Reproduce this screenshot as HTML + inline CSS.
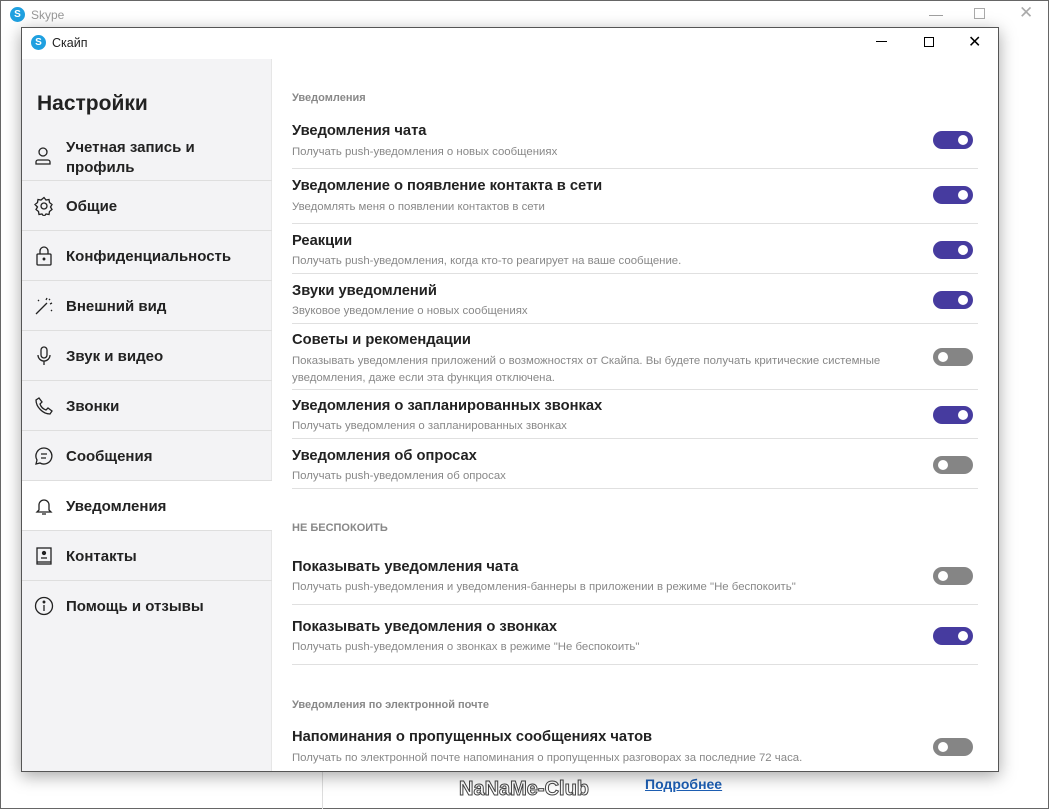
<!DOCTYPE html>
<html><head><meta charset="utf-8"><style>
*{margin:0;padding:0;box-sizing:border-box}
body{width:1049px;height:809px;overflow:hidden;background:#fff;font-family:"Liberation Sans","Noto Sans CJK SC",sans-serif;position:relative;color:#222}
.a{position:absolute;white-space:nowrap}
.outer{position:absolute;left:0;top:0;width:1049px;height:809px;border:1px solid #666;background:#fff}
.dlg{position:absolute;left:21px;top:27px;width:978px;height:745px;background:#fff;border:1px solid #555;box-shadow:0 4px 16px rgba(0,0,0,.35);overflow:hidden}
.side{position:absolute;left:0;top:31px;width:250px;height:714px;background:#f3f3f5;border-right:1px solid #e6e6e6}
.item{position:absolute;left:0;width:250px;height:50px;border-bottom:1px solid #dedede}
.item span{position:absolute;left:44px;top:17px;font-size:15px;font-weight:bold;color:#222}
.item svg{position:absolute;left:12px;top:15px}
.t{font-size:14.7px;font-weight:bold;color:#222}
.s{font-size:11.4px;color:#888}
.h{font-size:11px;font-weight:bold;color:#888}
.sep{position:absolute;left:270px;width:686px;height:1px;background:#e0e0e0}
.tg{position:absolute;left:911px;width:40px;height:18px;border-radius:9px;background:#463b9f}
.tg:after{content:"";position:absolute;right:5px;top:4px;width:10px;height:10px;border-radius:50%;background:#fff}
.tg.off{background:#858585}
.tg.off:after{right:auto;left:5px}
</style></head><body>
<div class="outer"></div>
<div class="a" style="left:10px;top:7px;width:15px;height:15px;border-radius:50%;background:#1fa0e0;color:#fff;font-size:10px;font-weight:bold;text-align:center;line-height:15px">S</div>
<div class="a" style="left:31px;top:8px;font-size:12px;color:#999">Skype</div>
<div class="a" style="left:929px;top:6px;font-size:14px;color:#999">—</div>
<div class="a" style="left:974px;top:8px;width:11px;height:11px;border:1px solid #aaa"></div>
<div class="a" style="left:1019px;top:3px;font-size:17px;color:#aaa">✕</div>
<div class="a" style="left:322px;top:771px;width:1px;height:38px;background:#ddd"></div>
<div class="a" style="left:459px;top:778px;font-size:20px;color:#fff;-webkit-text-stroke:1px #444;font-weight:bold">NaNaMe-Club</div>
<div class="a" style="left:645px;top:776px;font-size:14px;font-weight:bold;color:#1d5fb4;text-decoration:underline">Подробнее</div>

<div class="dlg">
 <div class="a" style="left:9px;top:7px;width:15px;height:15px;border-radius:50%;background:#1fa0e0;color:#fff;font-size:10px;font-weight:bold;text-align:center;line-height:15px">S</div>
 <div class="a" style="left:30px;top:8px;font-size:12.5px;color:#222">Скайп</div>
 <div class="a" style="left:854px;top:13px;width:11px;height:1px;background:#000"></div>
 <div class="a" style="left:902px;top:9px;width:10px;height:10px;border:1px solid #000"></div>
 <div class="a" style="left:946px;top:4px;font-size:16px;color:#000">✕</div>
 <div class="side">
  <div class="a" style="left:15px;top:33px;font-size:21px;font-weight:bold;color:#222">Настройки</div>
  <div class="item" style="top:71px;height:51px"><svg width="18" height="22" viewBox="0 0 18 22" fill="none" stroke="#222" stroke-width="1.3"><circle cx="9" cy="7" r="4"/><path d="M2 19v-2a2 2 0 0 1 2-2h10a2 2 0 0 1 2 2v2z"/></svg><span style="top:8px;line-height:20px">Учетная запись и<br>профиль</span></div>
  <div class="item" style="top:122px"><svg width="20" height="20" viewBox="0 0 20 20" fill="none" stroke="#222" stroke-width="1.3"><circle cx="10" cy="10" r="3"/><path d="M10 1.5l2 2.5 3-.5.5 3 2.5 2-1.5 2.5 1.5 2.5-2.5 2-.5 3-3-.5-2 2.5-2-2.5-3 .5-.5-3-2.5-2 1.5-2.5L1 8.5l2.5-2 .5-3 3 .5z"/></svg><span>Общие</span></div>
  <div class="item" style="top:172px"><svg width="20" height="20" viewBox="0 0 20 20" fill="none" stroke="#222" stroke-width="1.3"><rect x="3" y="8" width="14" height="11" rx="1"/><path d="M6 8V5a4 4 0 0 1 8 0v3"/><circle cx="10" cy="13" r=".8" fill="#222"/></svg><span>Конфиденциальность</span></div>
  <div class="item" style="top:222px"><svg width="20" height="20" viewBox="0 0 20 20" fill="none" stroke="#222" stroke-width="1.3"><path d="M2 18L13 7M12 4l1-2M16 8l2-1M15 3l1 1M4 4l1 1M17 14l1 1"/></svg><span>Внешний вид</span></div>
  <div class="item" style="top:272px"><svg width="20" height="20" viewBox="0 0 20 20" fill="none" stroke="#222" stroke-width="1.3"><rect x="7" y="1" width="6" height="11" rx="3"/><path d="M4 9a6 6 0 0 0 12 0M10 15v4"/></svg><span>Звук и видео</span></div>
  <div class="item" style="top:322px"><svg width="20" height="20" viewBox="0 0 20 20" fill="none" stroke="#222" stroke-width="1.3"><path d="M5 2l3 4-2 2c1 3 3 5 6 6l2-2 4 3-2 3C9 18 2 11 2 4z"/></svg><span>Звонки</span></div>
  <div class="item" style="top:372px"><svg width="20" height="20" viewBox="0 0 20 20" fill="none" stroke="#222" stroke-width="1.3"><path d="M10 2a8 8 0 1 1-4 15l-4 1 1-4A8 8 0 0 1 10 2zM7 8h6M7 12h5"/></svg><span>Сообщения</span></div>
  <div class="item" style="top:422px;background:#fff"><svg width="20" height="20" viewBox="0 0 20 20" fill="none" stroke="#222" stroke-width="1.3"><path d="M5 14V9a5 5 0 0 1 10 0v5l2 2H3zM8 18h4"/></svg><span>Уведомления</span></div>
  <div class="item" style="top:472px"><svg width="20" height="20" viewBox="0 0 20 20" fill="none" stroke="#222" stroke-width="1.3"><rect x="3" y="2" width="14" height="16"/><path d="M3 16h14"/><circle cx="10" cy="7" r="1.5" fill="#222"/><path d="M7 12h6"/></svg><span>Контакты</span></div>
  <div class="item" style="top:522px;border:none"><svg width="20" height="20" viewBox="0 0 20 20" fill="none" stroke="#222" stroke-width="1.3"><circle cx="10" cy="10" r="8.5"/><path d="M10 9v6"/><circle cx="10" cy="6" r=".8" fill="#222"/></svg><span>Помощь и отзывы</span></div>
 </div>

 <div class="a h" style="left:270px;top:64px">Уведомления</div>
 <div class="a t" style="left:270px;top:95px">Уведомления чата</div>
 <div class="a s" style="left:270px;top:118px">Получать push-уведомления о новых сообщениях</div>
 <div class="tg" style="top:103px"></div><div class="sep" style="top:140px"></div>

 <div class="a t" style="left:270px;top:150px">Уведомление о появление контакта в сети</div>
 <div class="a s" style="left:270px;top:173px">Уведомлять меня о появлении контактов в сети</div>
 <div class="tg" style="top:158px"></div><div class="sep" style="top:195px"></div>

 <div class="a t" style="left:270px;top:205px">Реакции</div>
 <div class="a s" style="left:270px;top:227px">Получать push-уведомления, когда кто-то реагирует на ваше сообщение.</div>
 <div class="tg" style="top:213px"></div><div class="sep" style="top:245px"></div>

 <div class="a t" style="left:270px;top:255px">Звуки уведомлений</div>
 <div class="a s" style="left:270px;top:277px">Звуковое уведомление о новых сообщениях</div>
 <div class="tg" style="top:263px"></div><div class="sep" style="top:295px"></div>

 <div class="a t" style="left:270px;top:304px">Советы и рекомендации</div>
 <div class="a s" style="left:270px;top:325px;line-height:17px">Показывать уведомления приложений о возможностях от Скайпа. Вы будете получать критические системные<br>уведомления, даже если эта функция отключена.</div>
 <div class="tg off" style="top:320px"></div><div class="sep" style="top:361px"></div>

 <div class="a t" style="left:270px;top:370px">Уведомления о запланированных звонках</div>
 <div class="a s" style="left:270px;top:392px">Получать уведомления о запланированных звонках</div>
 <div class="tg" style="top:378px"></div><div class="sep" style="top:410px"></div>

 <div class="a t" style="left:270px;top:420px">Уведомления об опросах</div>
 <div class="a s" style="left:270px;top:442px">Получать push-уведомления об опросах</div>
 <div class="tg off" style="top:428px"></div><div class="sep" style="top:460px"></div>

 <div class="a h" style="left:270px;top:494px">НЕ БЕСПОКОИТЬ</div>
 <div class="a t" style="left:270px;top:531px">Показывать уведомления чата</div>
 <div class="a s" style="left:270px;top:553px">Получать push-уведомления и уведомления-баннеры в приложении в режиме "Не беспокоить"</div>
 <div class="tg off" style="top:539px"></div><div class="sep" style="top:576px"></div>

 <div class="a t" style="left:270px;top:591px">Показывать уведомления о звонках</div>
 <div class="a s" style="left:270px;top:613px">Получать push-уведомления о звонках в режиме "Не беспокоить"</div>
 <div class="tg" style="top:599px"></div><div class="sep" style="top:636px"></div>

 <div class="a h" style="left:270px;top:671px">Уведомления по электронной почте</div>
 <div class="a t" style="left:270px;top:701px">Напоминания о пропущенных сообщениях чатов</div>
 <div class="a s" style="left:270px;top:724px">Получать по электронной почте напоминания о пропущенных разговорах за последние 72 часа.</div>
 <div class="tg off" style="top:710px"></div>
</div>
</body></html>
